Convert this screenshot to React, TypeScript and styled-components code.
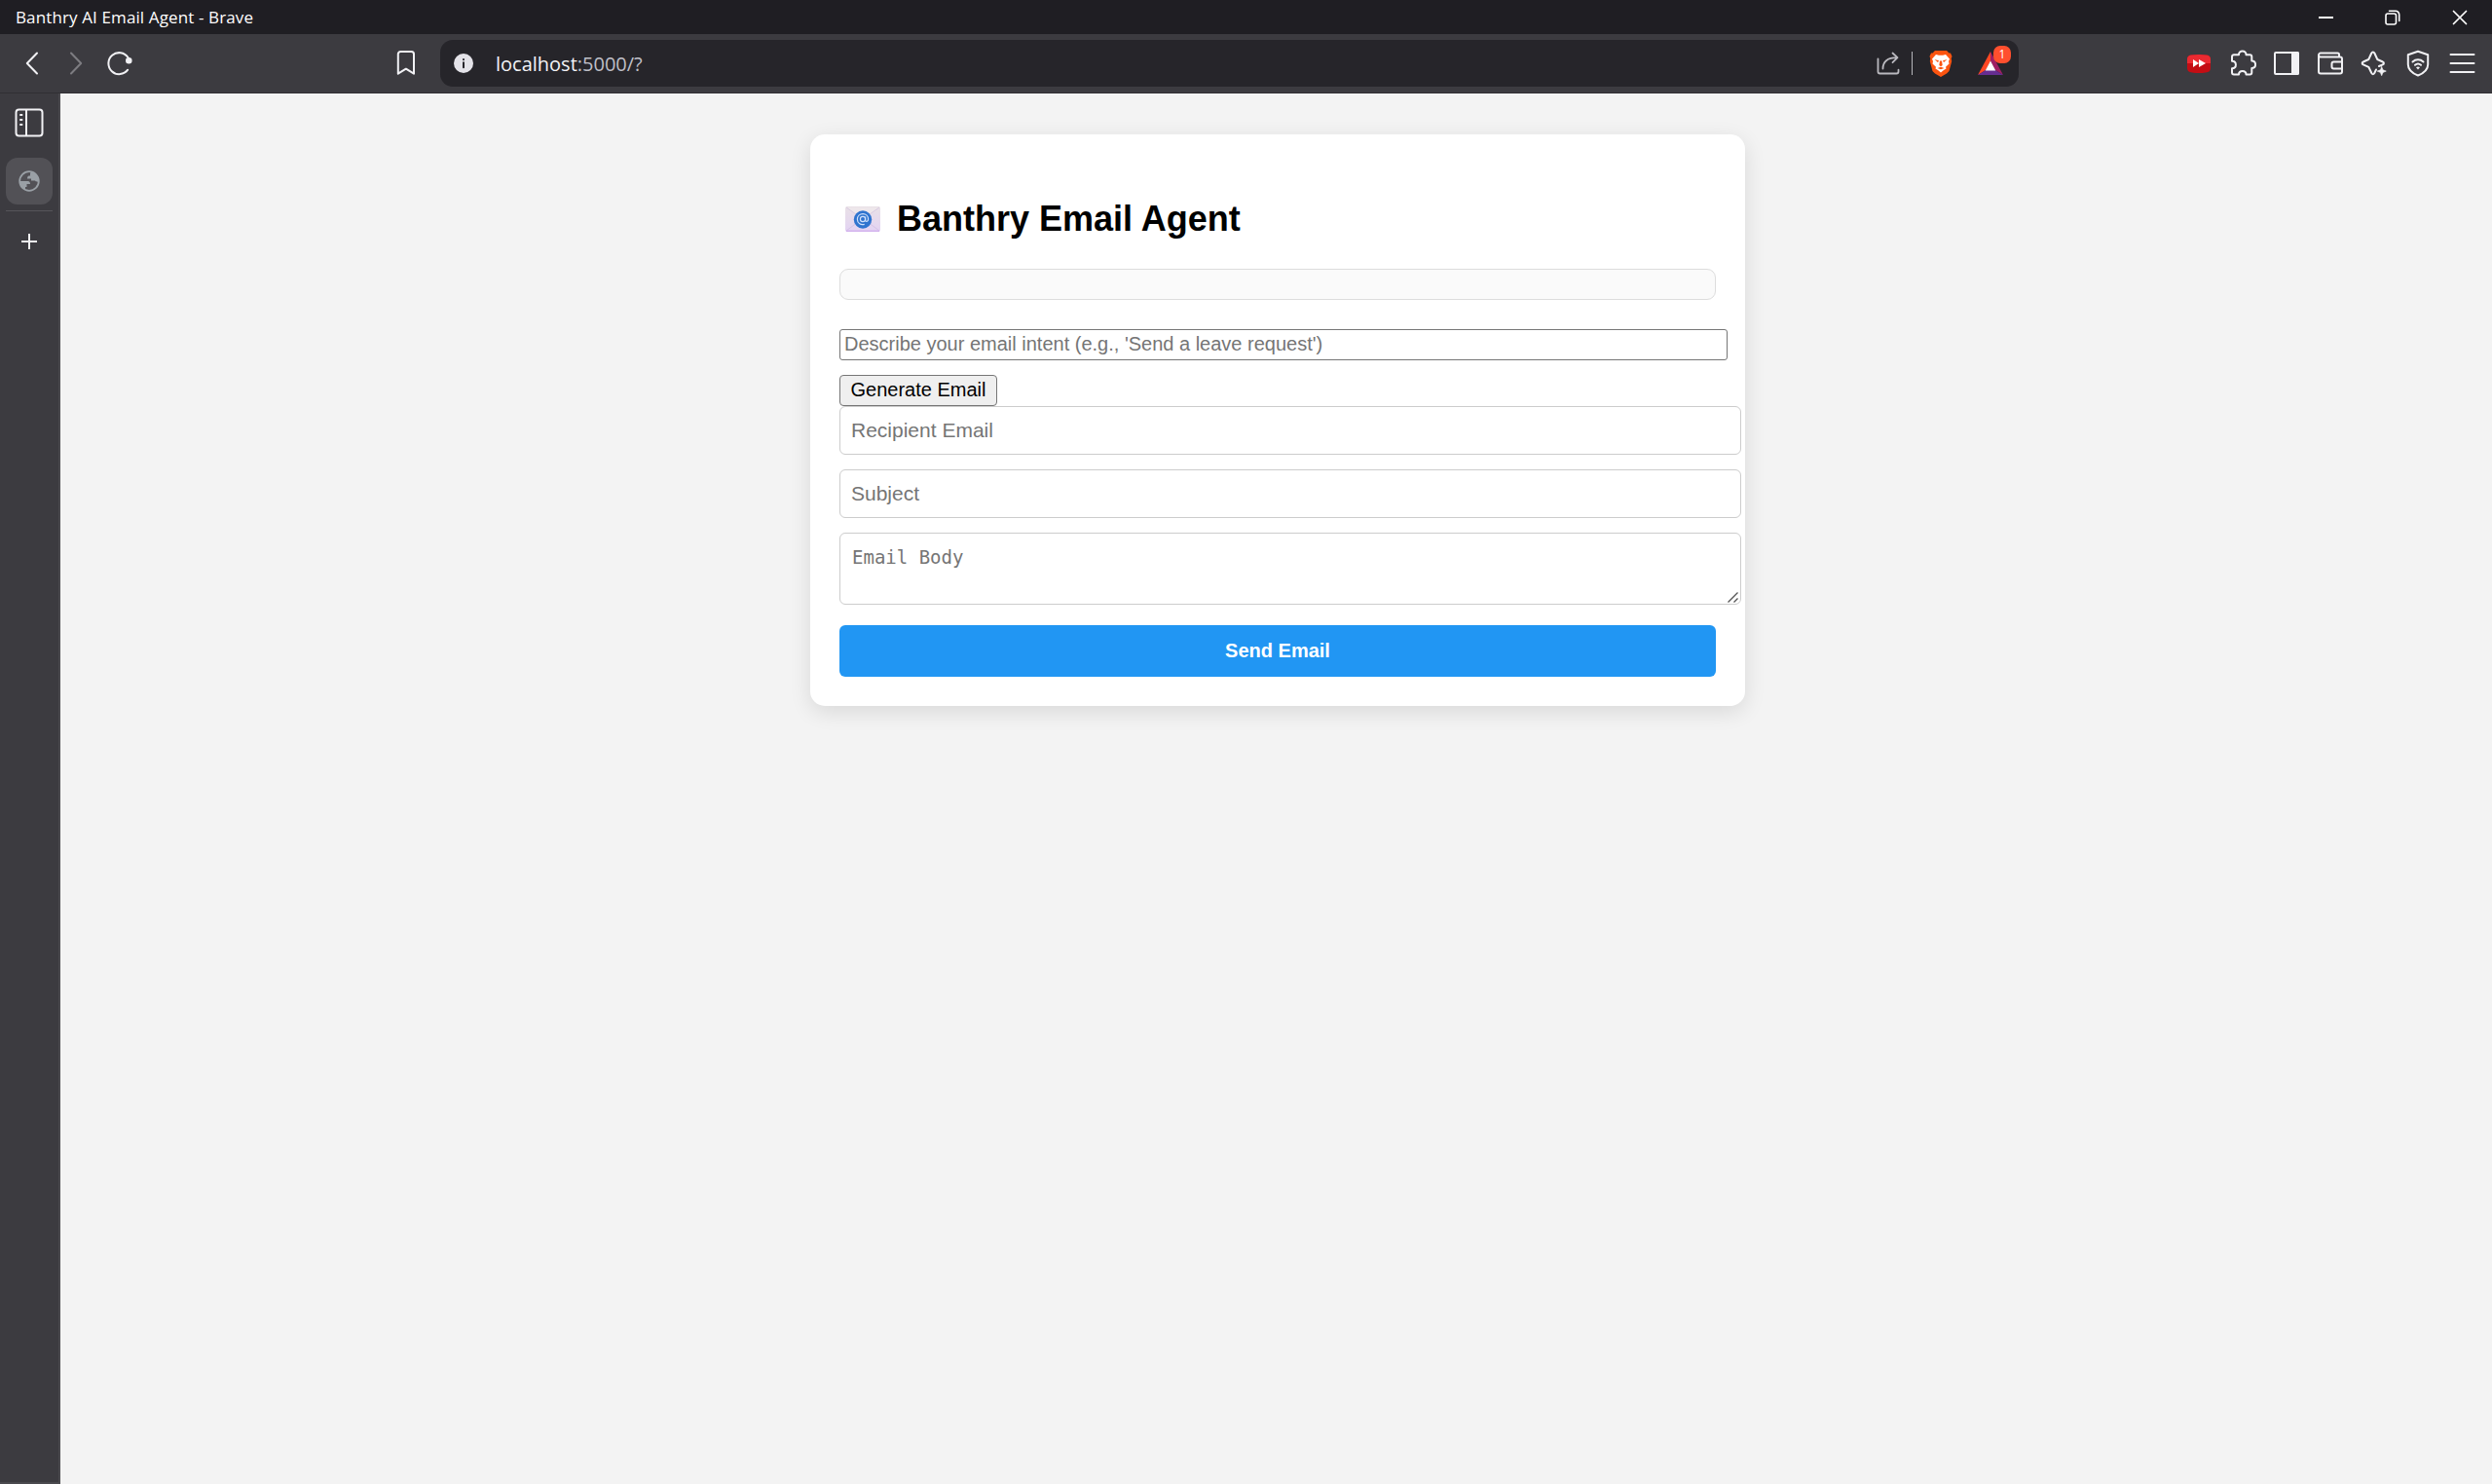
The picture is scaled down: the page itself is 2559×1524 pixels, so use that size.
import React from "react";
import styled, { createGlobalStyle } from "styled-components";

const Global = createGlobalStyle`
  html, body { margin: 0; padding: 0; }
  body { font-family: "Liberation Sans", Arial, sans-serif; background: #f3f3f3; overflow: hidden; }
  * { box-sizing: border-box; }
`;

const Window = styled.div`
  display: flex;
  flex-direction: column;
  width: 100vw;
  height: 100vh;
`;

const TitleBar = styled.header`
  display: flex;
  align-items: center;
  justify-content: space-between;
  height: 35px;
  padding: 0 25px 0 16px;
  background: #1f1e23;
  color: #fff;
`;

const WindowTitle = styled.span`
  font: 17px/35px "Open Sans", "Noto Sans", sans-serif;
  letter-spacing: 0.12px;
  white-space: nowrap;
`;

const WindowControls = styled.div`
  display: flex;
  align-items: center;
  gap: 53px;
`;

const Toolbar = styled.nav`
  display: flex;
  align-items: center;
  height: 61px;
  padding: 0 17px 1px 18px;
  background: #3c3b40;
  border-bottom: 1px solid #302f33;
  color: #f1f1f4;
`;

const NavGroup = styled.div`
  display: flex;
  gap: 15px;
  width: 382px;
`;

const BookmarkSlot = styled.div`
  display: flex;
  width: 52px;
  padding-left: 2px;
`;

const AddressBar = styled.div`
  display: flex;
  align-items: center;
  width: 1621px;
  height: 48px;
  padding: 0 14px;
  border-radius: 13px;
  background: #26252a;
`;

const Url = styled.div`
  flex: 1;
  margin-left: 23px;
  padding-top: 1px;
  font: 20px/47px "Open Sans", "Noto Sans", sans-serif;
  color: #bfbfc7;
  white-space: nowrap;
`;

const Host = styled.span`
  color: #f3f3f6;
`;

const AddressDivider = styled.span`
  width: 1px;
  height: 24px;
  margin: 0 17px 0 12px;
  background: #b5b5ba;
`;

const BadgeHolder = styled.div`
  position: relative;
  display: flex;
  margin-left: 25px;
  margin-right: 1px;
`;

const RewardBadge = styled.span`
  position: absolute;
  left: 17px;
  top: -5px;
  width: 18px;
  height: 18px;
  border-radius: 7px;
  background: #ff4f2e;
  color: #fff;
  font: 12px/18px "Open Sans", sans-serif;
  text-align: center;
`;

const Extensions = styled.div`
  display: flex;
  gap: 17px;
  margin-left: auto;
`;

const Body = styled.div`
  display: flex;
  flex: 1;
  min-height: 0;
`;

const Sidebar = styled.aside`
  display: flex;
  flex-direction: column;
  align-items: center;
  width: 62px;
  padding-top: 15px;
  background: #3c3b40;
  border-right: 2px solid #4a494e;
  border-bottom: 2px solid #4a494e;
  color: #f1f1f4;
`;

const TabButton = styled.div`
  display: flex;
  align-items: center;
  justify-content: center;
  width: 48px;
  height: 48px;
  margin-top: 21px;
  border-radius: 12px;
  background: #525156;
`;

const SideDivider = styled.div`
  width: 48px;
  height: 1px;
  margin: 6px 0 17px;
  background: #56555a;
`;

const Page = styled.main`
  flex: 1;
  padding-top: 42px;
  background: #f3f3f3;
`;

const Card = styled.section`
  width: 960px;
  height: 587px;
  margin-left: 770px;
  padding: 65px 30px 30px;
  border-radius: 15px;
  background: #fff;
  box-shadow: 0 6px 22px rgba(0, 0, 0, 0.11);
`;

const Heading = styled.h1`
  display: flex;
  align-items: center;
  gap: 16px;
  height: 44px;
  margin: 0;
  padding-left: 6px;
  font-size: 36px;
  line-height: 44px;
  font-weight: 700;
  color: #000;
`;

const Log = styled.div`
  height: 32px;
  margin-top: 29px;
  border: 1px solid #ddd;
  border-radius: 9px;
  background: #fafafa;
`;

const IntentInput = styled.input`
  display: block;
  width: 912px;
  height: 32px;
  margin-top: 30px;
  padding: 1px 4px 3px;
  border: 1px solid #767676;
  border-radius: 3px;
  font: 20px "Liberation Sans", Arial, sans-serif;
  &::placeholder { color: #757575; }
`;

const GenerateButton = styled.button`
  display: block;
  width: 162px;
  height: 32px;
  margin-top: 15px;
  padding: 0 0 2px;
  border: 1px solid #767676;
  border-radius: 4px;
  background: #efefef;
  color: #000;
  font: 20px "Liberation Sans", Arial, sans-serif;
`;

const Field = styled.input`
  display: block;
  width: 926px;
  height: 50px;
  margin-bottom: 15px;
  padding: 0 11px;
  border: 1px solid #ccc;
  border-radius: 6px;
  font: 21px "Liberation Sans", Arial, sans-serif;
  &::placeholder { color: #757575; }
`;

const BodyField = styled.textarea`
  display: block;
  width: 926px;
  height: 74px;
  padding: 13px 12px;
  border: 1px solid #ccc;
  border-radius: 6px;
  resize: none;
  overflow: hidden;
  font: 19px/23px "DejaVu Sans Mono", monospace;
  &::placeholder { color: #757575; }
`;

const BodyWrap = styled.div`
  position: relative;
  width: 926px;
`;

const ResizeGrip = styled.svg`
  position: absolute;
  right: 3px;
  bottom: 2px;
`;

const SendButton = styled.button`
  display: block;
  width: 100%;
  height: 53px;
  margin-top: 21px;
  padding: 0 0 1px;
  border: 0;
  border-radius: 6px;
  background: #2196f3;
  color: #fff;
  font: bold 20px "Liberation Sans", Arial, sans-serif;
`;

type IconProps = {
  w?: number;
  h?: number;
  sw?: number;
  color?: string;
  children: React.ReactNode;
};

const Glyph = styled.svg`
  display: block;
  flex: none;
`;

const Icon = ({ w = 28, h = 28, sw = 2, color = "currentColor", children }: IconProps) => (
  <Glyph
    width={w}
    height={h}
    viewBox={`0 0 ${w} ${h}`}
    fill="none"
    stroke={color}
    strokeWidth={sw}
    strokeLinecap="round"
    strokeLinejoin="round"
  >
    {children}
  </Glyph>
);

const Envelope = () => (
  <svg width="37" height="27" viewBox="0 0 37 27">
    <defs>
      <linearGradient id="paper" x1="0" y1="0" x2="0" y2="1">
        <stop offset="0" stopColor="#e9e1e6" />
        <stop offset="1" stopColor="#e3d3f3" />
      </linearGradient>
    </defs>
    <rect x="0" y="0" width="36" height="26" rx="2" fill="url(#paper)" />
    <path d="M1 1l17 12L35 1" fill="#eee7eb" stroke="#d9cbe2" strokeWidth="1" />
    <path d="M1 25l12-9M35 25L23 16" stroke="#d5c3e6" strokeWidth="1" />
    <path d="M1 25.300h34" stroke="#d3b2ee" strokeWidth="1.500" />
    <circle cx="18" cy="13.500" r="9.200" fill="#2f74cf" />
    <circle cx="18" cy="13" r="2.600" fill="none" stroke="#cfe0fb" strokeWidth="1.200" />
    <path
      d="M20.600 10.500v3.400c0 2.400 3 2 3-.9 0-3.400-2.500-5.300-5.500-5.300-3.200 0-5.700 2.300-5.700 5.600 0 4.200 3.800 6.200 7.300 5.100"
      fill="none"
      stroke="#cfe0fb"
      strokeWidth="1.200"
    />
  </svg>
);

export default function App() {
  return (
    <>
      <Global />
      <Window>
        <TitleBar>
          <WindowTitle>Banthry AI Email Agent - Brave</WindowTitle>
          <WindowControls>
            <Icon w={16} h={16} color="#fff">
              <path d="M1 8h15" strokeLinecap="butt" />
            </Icon>
            <Icon w={16} h={16} sw={1.6} color="#fff">
              <rect x="1" y="4" width="10.500" height="11" rx="2" />
              <path d="M4.500 1.300h6.500a3.700 3.700 0 0 1 3.700 3.700v6.500" />
            </Icon>
            <Icon w={16} h={16} sw={1.7} color="#fff">
              <path d="M1.500 1.500l13 13M14.500 1.500l-13 13" />
            </Icon>
          </WindowControls>
        </TitleBar>

        <Toolbar>
          <NavGroup>
            <Icon w={30}>
              <path d="M20 3.500L9.800 14 20 24.500" />
            </Icon>
            <Icon w={30} color="#7d7c81">
              <path d="M10 3.500L20.200 14 10 24.500" />
            </Icon>
            <Icon w={30}>
              <path d="M23.200 20.700A11 11 0 1 1 23.500 8" />
              <circle cx="24.300" cy="11.300" r="2.300" fill="currentColor" />
            </Icon>
          </NavGroup>
          <BookmarkSlot>
            <Icon w={30}>
              <path d="M6.800 4.500a2.500 2.500 0 0 1 2.500-2.500h11.200a2.500 2.500 0 0 1 2.500 2.500v20.200l-8.100-5-8.100 5z" />
            </Icon>
          </BookmarkSlot>
          <AddressBar>
            <Icon w={20} h={20}>
              <circle cx="10" cy="10" r="10" fill="#e4e3e9" stroke="none" />
              <path d="M10 9.200v5M10 6v.2" stroke="#26252a" />
            </Icon>
            <Url>
              <Host>localhost</Host>:5000/?
            </Url>
            <Icon w={24} h={24} sw={1.8} color="#bab9bf">
              <path d="M1.500 7.500v13a2 2 0 0 0 2 2h17a2 2 0 0 0 2-2v-1.800" />
              <path d="M6.500 17.500c0-7 4.500-11.300 14.500-11.300M16.500 1.500l5 4.700-5 5" />
            </Icon>
            <AddressDivider />
            <Icon w={24} h={28}>
              <path
                d="M6 1h12l2.500 2.500L22 3.500l1.500 3.500-.8 2 .5 3-2.700 10-2.500 2.500L12 28l-6-3.500-2.500-2.500L.8 12l.5-3-.8-2L2 3.500h1.500z"
                fill="#fb5410"
                stroke="none"
              />
              <path
                d="M7 5l3 .7h4l3-.7 4 4.600-1 2.400.5 2.500-3.500 3.300 .5 1.700-2.500 1.500L12 23.500 9 21l-2.500-1.500.5-1.700-3.500-3.300.5-2.500-1-2.400z"
                fill="#fff"
                stroke="none"
              />
              <path
                d="M5.500 10l4.500 1.200-1 1.800zM18.500 10l-4.500 1.200 1 1.800zM11 11.500h2l.7 4.500-1.700 1.200-1.700-1.200zM8.500 19l3.500-1.300 3.500 1.300-3.500 1.200z"
                fill="#fb5410"
                stroke="none"
              />
            </Icon>
            <BadgeHolder>
              <Icon w={28} h={26}>
                <path d="M14 1L1 25l8-5 5-9z" fill="#ff4724" stroke="none" />
                <path d="M14 1l13 24-8-5-5-9z" fill="#9e1f63" stroke="none" />
                <path d="M1 25h26l-8-5H9z" fill="#662d91" stroke="none" />
                <path d="M14 10.500l-5.300 10h10.600z" fill="#fff" stroke="none" />
              </Icon>
              <RewardBadge>1</RewardBadge>
            </BadgeHolder>
          </AddressBar>

          <Extensions>
            <Icon>
              <path d="M7 5.500q7-1 14 0 5 0 5 4.500v9q0 4-5 4.500-7 1-14 0-5-.5-5-4.500v-9q0-4.500 5-4.500z" fill="#c40d14" stroke="none" />
              <path d="M2 14v-4q0-4.500 5-4.500 7-1 14 0 5 0 5 4.500v4z" fill="#ea2a31" stroke="none" />
              <path d="M8 10l6 4-6 4zM14 10l7 4-7 4z" fill="#fff" stroke="none" />
            </Icon>
            <Icon>
              <path d="M3 7.200a2 2 0 0 1 2-2h5c-.5-5 8-5 7.500 0h3.800a2 2 0 0 1 2 2v4.300c5 0 5 7.500 0 7.500v4.500a2 2 0 0 1-2 2h-3.800c0-4.700-7.500-4.700-7.500 0H5a2 2 0 0 1-2-2v-4.300c5.200 0 5.200-7.500 0-7.500z" />
            </Icon>
            <Icon>
              <rect x="2" y="3" width="24" height="22" rx="1" />
              <path d="M19 2h6a2 2 0 0 1 2 2v20a2 2 0 0 1-2 2h-6z" fill="currentColor" stroke="none" />
            </Icon>
            <Icon>
              <path d="M23 7V5a1.500 1.500 0 0 0-1.500-1.500H4A2 2 0 0 0 2 5.500v17a2 2 0 0 0 2 2h20a2 2 0 0 0 2-2v-13a2 2 0 0 0-2-2H4a2 2 0 0 1-2-2" />
              <path d="M26 12.500h-8.500a2 2 0 0 0-2 2v3a2 2 0 0 0 2 2H26" />
            </Icon>
            <Icon>
              <path d="M16 20.500L14.300 24c-.6 1.500-2.400 1.500-3 0l-3-6.200-5.500-2.500c-1.500-.6-1.500-2.200 0-2.800l5.500-2.500 3-6.500c.6-1.500 2.400-1.500 3 0l3 6.500 5.500 2.500c1.500.6 1.500 2.200 0 2.800L19 17" />
              <path d="M21.700 17.500l1.300 3.300 3.300 1.300-3.300 1.300-1.300 3.300-1.300-3.300-3.300-1.300 3.300-1.300z" fill="currentColor" strokeWidth="0.600" />
            </Icon>
            <Icon>
              <path d="M14 1.800l10.200 3.400v10c0 5-4.500 9-10.200 11.300C8.300 24.200 3.800 20.200 3.800 15.200v-10z" />
              <path d="M8.500 12.500c3.200-2.900 7.800-2.900 11 0M11 15.800c1.800-1.600 4.200-1.600 6 0" />
              <path d="M12 18.300c1.300-1 2.700-1 4 0l-2 2.200z" fill="currentColor" stroke="none" />
            </Icon>
            <Icon>
              <path d="M2.500 5h24M2.500 14h24M2.500 23h24" />
            </Icon>
          </Extensions>
        </Toolbar>

        <Body>
          <Sidebar>
            <Icon w={30} h={30} sw={2}>
              <rect x="1.500" y="1.500" width="27" height="27" rx="3" />
              <path d="M12 2v26M6 7h1.500M6 12h1.500M6 17h1.500" />
            </Icon>
            <TabButton>
              <Icon w={22} h={22}>
                <circle cx="11" cy="11" r="9.800" stroke="#9aa0a6" strokeWidth="1.800" />
                <path
                  d="M1 11h8.500c2 0 2.500 1.500 2.500 3H8.500v3H7v2.500C3 18 1 15 1 11zM9 8.500c0-2.500 1-3 3-3V3l1-1.500C18 3 21 7 21 11c-1 1-3 1-4-.5H13V8.500z"
                  fill="#9aa0a6"
                  stroke="none"
                />
              </Icon>
            </TabButton>
            <SideDivider />
            <Icon>
              <path d="M14 6v16M6 14h16" strokeLinecap="butt" />
            </Icon>
          </Sidebar>

          <Page>
            <Card>
              <Heading>
                <Envelope />
                Banthry Email Agent
              </Heading>
              <Log />
              <IntentInput placeholder="Describe your email intent (e.g., 'Send a leave request')" />
              <GenerateButton>Generate Email</GenerateButton>
              <Field placeholder="Recipient Email" />
              <Field placeholder="Subject" />
              <BodyWrap>
                <BodyField placeholder="Email Body" />
                <ResizeGrip width="11" height="11" viewBox="0 0 11 11" stroke="#555" strokeWidth="1.300">
                  <path d="M.5 10.500l10-10M6.500 10.500l4-4" />
                </ResizeGrip>
              </BodyWrap>
              <SendButton>Send Email</SendButton>
            </Card>
          </Page>
        </Body>
      </Window>
    </>
  );
}
